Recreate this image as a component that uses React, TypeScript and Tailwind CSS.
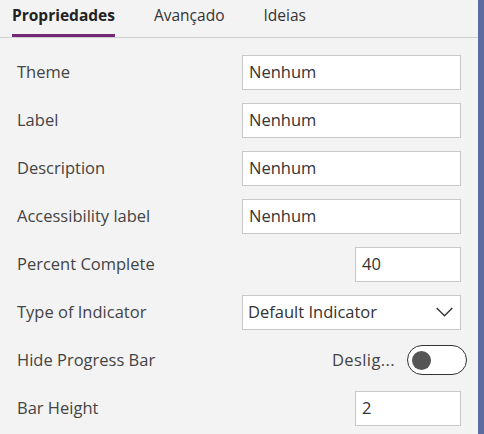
const font = { fontFamily: '"Open Sans", "Noto Sans", sans-serif' };

function TextBox({ value, small }: { value: string; small?: boolean }) {
  return (
    <div
      className={`h-[35px] bg-white border border-[#c8c8c8] flex items-center px-[6px] text-[16.5px] text-[#333] ${
        small ? "w-[106px]" : "w-[219px]"
      }`}
    >
      {value}
    </div>
  );
}

function Row({ label, children }: { label: string; children: React.ReactNode }) {
  return (
    <div className="h-[48px] flex items-center justify-between pl-[17px] pr-[17px]">
      <span className="text-[16.5px] text-[#444]">{label}</span>
      {children}
    </div>
  );
}

export default function App() {
  return (
    <div className="w-[484px] h-[434px] bg-[#f3f3f3] flex overflow-hidden" style={font}>
      <div className="flex-1 flex flex-col">
        {/* Tabs */}
        <div className="h-[38px] border-b border-[#cfcfcf] flex items-end px-[12px] gap-[39px]">
          <div className="flex flex-col">
            <span className="text-[15.5px] font-bold text-[#222] pb-[7px]">Propriedades</span>
            <div className="h-[3px] bg-[#742774]" />
          </div>
          <span className="text-[15.5px] text-[#333] pb-[10px]">Avançado</span>
          <span className="text-[15.5px] text-[#333] pb-[10px]">Ideias</span>
        </div>

        {/* Properties */}
        <div className="pt-[10px] flex flex-col">
          <Row label="Theme">
            <TextBox value="Nenhum" />
          </Row>
          <Row label="Label">
            <TextBox value="Nenhum" />
          </Row>
          <Row label="Description">
            <TextBox value="Nenhum" />
          </Row>
          <Row label="Accessibility label">
            <TextBox value="Nenhum" />
          </Row>
          <Row label="Percent Complete">
            <TextBox value="40" small />
          </Row>
          <Row label="Type of Indicator">
            <div className="h-[35px] w-[219px] bg-white border border-[#c8c8c8] flex items-center justify-between pl-[5px] pr-[7px] text-[16.5px] text-[#333]">
              <span>Default Indicator</span>
              <svg width="17" height="10" viewBox="0 0 17 10" fill="none">
                <polyline points="0.7,1 8.5,8.7 16.3,1" stroke="#333" strokeWidth="1.4" />
              </svg>
            </div>
          </Row>
          <div className="h-[48px] flex items-center justify-between pl-[17px] pr-[11px]">
            <span className="text-[16.5px] text-[#444]">Hide Progress Bar</span>
            <div className="flex items-center gap-[12px]">
              <span className="text-[16.5px] text-[#444] tracking-[0.4px]">Deslig...</span>
              <div className="w-[60px] h-[30px] rounded-full border border-[#333] bg-white flex items-center pl-[4px]">
                <div className="w-[19px] h-[19px] rounded-full bg-[#555]" />
              </div>
            </div>
          </div>
          <Row label="Bar Height">
            <TextBox value="2" small />
          </Row>
        </div>
      </div>
      <div className="w-[6px] h-full bg-[#5c6ba0]" />
    </div>
  );
}
